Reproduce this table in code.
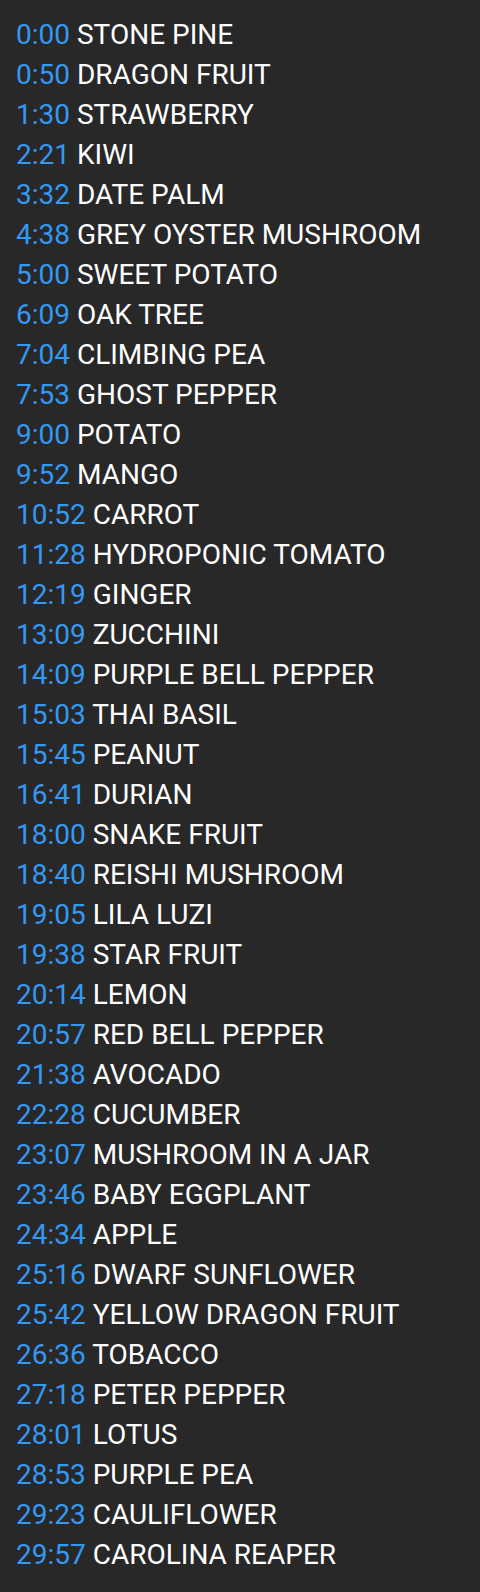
const tracks = [
  ['0:00', 'STONE PINE'],
  ['0:50', 'DRAGON FRUIT'],
  ['1:30', 'STRAWBERRY'],
  ['2:21', 'KIWI'],
  ['3:32', 'DATE PALM'],
  ['4:38', 'GREY OYSTER MUSHROOM'],
  ['5:00', 'SWEET POTATO'],
  ['6:09', 'OAK TREE'],
  ['7:04', 'CLIMBING PEA'],
  ['7:53', 'GHOST PEPPER'],
  ['9:00', 'POTATO'],
  ['9:52', 'MANGO'],
  ['10:52', 'CARROT'],
  ['11:28', 'HYDROPONIC TOMATO'],
  ['12:19', 'GINGER'],
  ['13:09', 'ZUCCHINI'],
  ['14:09', 'PURPLE BELL PEPPER'],
  ['15:03', 'THAI BASIL'],
  ['15:45', 'PEANUT'],
  ['16:41', 'DURIAN'],
  ['18:00', 'SNAKE FRUIT'],
  ['18:40', 'REISHI MUSHROOM'],
  ['19:05', 'LILA LUZI'],
  ['19:38', 'STAR FRUIT'],
  ['20:14', 'LEMON'],
  ['20:57', 'RED BELL PEPPER'],
  ['21:38', 'AVOCADO'],
  ['22:28', 'CUCUMBER'],
  ['23:07', 'MUSHROOM IN A JAR'],
  ['23:46', 'BABY EGGPLANT'],
  ['24:34', 'APPLE'],
  ['25:16', 'DWARF SUNFLOWER'],
  ['25:42', 'YELLOW DRAGON FRUIT'],
  ['26:36', 'TOBACCO'],
  ['27:18', 'PETER PEPPER'],
  ['28:01', 'LOTUS'],
  ['28:53', 'PURPLE PEA'],
  ['29:23', 'CAULIFLOWER'],
  ['29:57', 'CAROLINA REAPER'],
];

export default function App() {
  return (
    <div className="min-h-screen bg-[#282828] px-[16px] pt-[15px] pb-[17px] font-['Roboto',sans-serif] text-[28px] leading-[40px] text-white">
      {tracks.map(([time, name]) => (
        <div key={time} className="whitespace-nowrap">
          <span className="text-[#3399f3]">{time}</span> {name}
        </div>
      ))}
    </div>
  );
}
